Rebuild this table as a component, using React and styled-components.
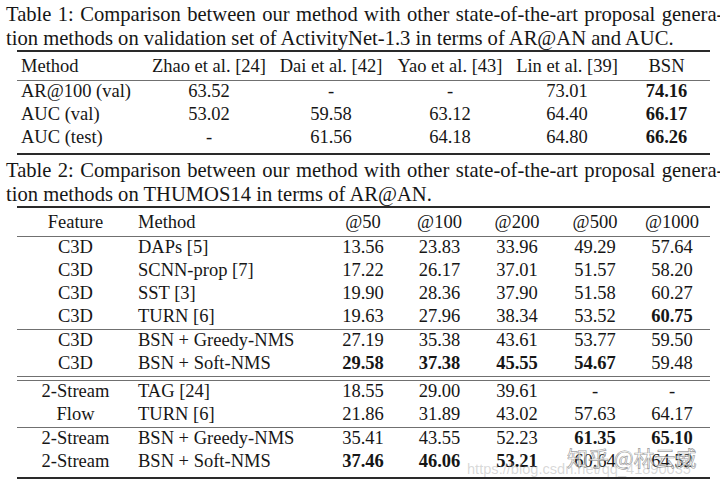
import styled, {createGlobalStyle} from "styled-components";

const GlobalStyle = createGlobalStyle`
  html, body {
    margin: 0;
    padding: 0;
    background: #fff;
  }
`;

const Page = styled.div`
  position: relative;
  width: 720px;
  height: 488px;
  overflow: hidden;
  box-sizing: border-box;
  padding-top: 2px;
  background: #fff;
  color: #161616;
  font-family: "Liberation Serif", "Times New Roman", serif;
`;

const Caption = styled.div`
  font-size: 20.6px;
  line-height: 24px;
  padding-left: 6px;
  white-space: nowrap;
  margin-top: ${p => p.$gap || 0}px;
`;

// first caption line is justified in the paper, so its spaces are a bit wider
const CaptionLine = styled.div`
  word-spacing: ${p => (p.$justify ? 1.2 : 0)}px;
`;

const Table = styled.div`
  margin-left: 17px;
  width: 693px;
  font-size: 18.5px;
`;

const Rule = styled.div`
  height: ${p => (p.$heavy ? 2 : 1)}px;
  background: ${p => (p.$heavy ? "#2a2a2a" : "#707070")};
  margin-top: ${p => p.$gap || 0}px;
`;

const Group = styled.div`
  padding-bottom: ${p => (p.$last ? 3 : 0)}px;
`;

const Row = styled.div`
  display: grid;
  grid-template-columns: ${p => p.$cols};
  line-height: 20px;
  padding: ${p => (p.$head ? "4px 0" : "0 0 3px")};
`;

const Cell = styled.span`
  text-align: ${p => (p.$left ? "left" : "center")};
  padding-left: ${p => (p.$left ? 4 : 0)}px;
  font-weight: ${p => (p.$bold ? 700 : 400)};
  white-space: nowrap;
`;

// watermarks lying over the last rows
const Zhihu = styled.div`
  position: absolute;
  left: 567px;
  top: 443px;
  font-family: "Noto Sans CJK SC", "Noto Sans", sans-serif;
  font-size: 21px;
  line-height: 28px;
  color: rgba(255, 255, 255, 0.72);
  -webkit-text-stroke: 0.7px rgba(100, 100, 100, 0.65);
  white-space: nowrap;
`;

const Csdn = styled.div`
  position: absolute;
  left: 467px;
  top: 460px;
  font-family: "Liberation Sans", Arial, sans-serif;
  font-size: 14.6px;
  line-height: 18px;
  color: rgba(170, 170, 170, 0.45);
  white-space: nowrap;
`;

const T1_COLS = "128px 128px 116px 122px 112px 87px";
const T2_COLS = "117px 191px 76px 77px 78px 78px 76px";

const table1 = {
  head: ["Method", "Zhao et al. [24]", "Dai et al. [42]", "Yao et al. [43]", "Lin et al. [39]", "BSN"],
  rows: [
    {cells: ["AR@100 (val)", "63.52", "-", "-", "73.01", "74.16"], bold: [5]},
    {cells: ["AUC (val)", "53.02", "59.58", "63.12", "64.40", "66.17"], bold: [5]},
    {cells: ["AUC (test)", "-", "61.56", "64.18", "64.80", "66.26"], bold: [5]},
  ],
};

const table2Head = ["Feature", "Method", "@50", "@100", "@200", "@500", "@1000"];

const table2Groups = [
  [
    {cells: ["C3D", "DAPs [5]", "13.56", "23.83", "33.96", "49.29", "57.64"], bold: []},
    {cells: ["C3D", "SCNN-prop [7]", "17.22", "26.17", "37.01", "51.57", "58.20"], bold: []},
    {cells: ["C3D", "SST [3]", "19.90", "28.36", "37.90", "51.58", "60.27"], bold: []},
    {cells: ["C3D", "TURN [6]", "19.63", "27.96", "38.34", "53.52", "60.75"], bold: [6]},
  ],
  [
    {cells: ["C3D", "BSN + Greedy-NMS", "27.19", "35.38", "43.61", "53.77", "59.50"], bold: []},
    {cells: ["C3D", "BSN + Soft-NMS", "29.58", "37.38", "45.55", "54.67", "59.48"], bold: [2, 3, 4, 5]},
  ],
  [
    {cells: ["2-Stream", "TAG [24]", "18.55", "29.00", "39.61", "-", "-"], bold: []},
    {cells: ["Flow", "TURN [6]", "21.86", "31.89", "43.02", "57.63", "64.17"], bold: []},
  ],
  [
    {cells: ["2-Stream", "BSN + Greedy-NMS", "35.41", "43.55", "52.23", "61.35", "65.10"], bold: [5, 6]},
    {cells: ["2-Stream", "BSN + Soft-NMS", "37.46", "46.06", "53.21", "60.64", "64.52"], bold: [2, 3, 4]},
  ],
];

function DataRow({cols, cells, bold = [], leftCol, head}) {
  return (
    <Row $cols={cols} $head={head}>
      {cells.map((c, i) => (
        <Cell key={i} $left={i === leftCol} $bold={bold.includes(i)}>
          {c}
        </Cell>
      ))}
    </Row>
  );
}

export default function App() {
  return (
    <Page>
      <GlobalStyle />
      <Caption>
        <CaptionLine $justify>
          Table 1: Comparison between our method with other state-of-the-art proposal genera-
        </CaptionLine>
        <CaptionLine>tion methods on validation set of ActivityNet-1.3 in terms of AR@AN and AUC.</CaptionLine>
      </Caption>
      <Table>
        <Rule $heavy />
        <DataRow cols={T1_COLS} cells={table1.head} leftCol={0} head />
        <Rule />
        <Group $last>
          {table1.rows.map((r, i) => (
            <DataRow key={i} cols={T1_COLS} cells={r.cells} bold={r.bold} leftCol={0} />
          ))}
        </Group>
        <Rule $heavy />
      </Table>

      <Caption $gap={3}>
        <CaptionLine $justify>
          Table 2: Comparison between our method with other state-of-the-art proposal genera-
        </CaptionLine>
        <CaptionLine>tion methods on THUMOS14 in terms of AR@AN.</CaptionLine>
      </Caption>
      <Table>
        <Rule $heavy />
        <DataRow cols={T2_COLS} cells={table2Head} leftCol={1} head />
        {table2Groups.map((group, g) => (
          <div key={g}>
            <Rule />
            {g === 2 && <Rule $gap={3} />}
            <Group $last={g === table2Groups.length - 1}>
              {group.map((r, i) => (
                <DataRow key={i} cols={T2_COLS} cells={r.cells} bold={r.bold} leftCol={1} />
              ))}
            </Group>
          </div>
        ))}
        <Rule $heavy />
      </Table>

      <Csdn>https://blog.csdn.net/qq_41890035</Csdn>
      <Zhihu>知乎 @林云威</Zhihu>
    </Page>
  );
}
